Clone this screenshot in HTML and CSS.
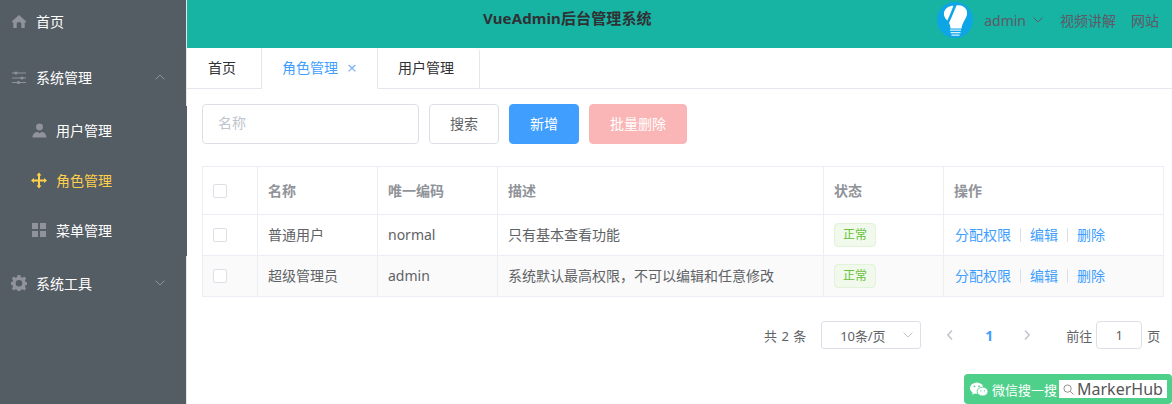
FILE: index.html
```html
<!DOCTYPE html>
<html lang="zh-CN">
<head>
<meta charset="utf-8">
<title>VueAdmin</title>
<link rel="stylesheet" href="styles.css">
</head>
<body>
<div class="app">
  <aside class="side">
    <ul class="menu">
      <li class="item top">
        <svg class="ic ic-home" viewBox="0 0 14 13"><path d="M7 0 0 6.200V7.500H1.300V13H4.700V8.500Q4.700 7 7 7T9.300 8.500V13H12.700V7.500H14V6.200Z"/></svg>
        <span>首页</span>
      </li>
      <li class="item top">
        <svg class="ic ic-sliders" viewBox="0 0 14 13"><path d="M0 1.500h14v1H0zM0 6.500h14v1H0zM0 11h14v1H0z"/><circle cx="4" cy="2" r="1.600"/><circle cx="10" cy="7" r="1.600"/><circle cx="6.500" cy="11.500" r="1.600"/></svg>
        <span class="lbl">系统管理</span>
        <svg class="arrow" viewBox="0 0 10 6"><path d="M.5 5.500 5 1l4.500 4.500"/></svg>
      </li>
      <li class="sub">
        <ul class="sublist">
          <li class="item subitem">
            <svg class="ic ic-user" viewBox="0 0 16 16"><circle cx="8" cy="4.200" r="3.700"/><path d="M.5 15.500c0-4 3-6 5-6.300L8 11l2.500-1.800c2 .3 5 2.300 5 6.300Z"/></svg>
            <span>用户管理</span>
          </li>
          <li class="item subitem active">
            <svg class="ic ic-move" viewBox="0 0 16 16"><path d="M8 0 10.500 3H9V7H13V5.500L16 8 13 10.500V9H9V13H10.500L8 16 5.500 13H7V9H3V10.500L0 8 3 5.500V7H7V3H5.500Z"/></svg>
            <span>角色管理</span>
          </li>
          <li class="item subitem">
            <svg class="ic ic-grid" viewBox="0 0 14 14"><path d="M0 0h6v6H0zM8 0h6v6H8zM0 8h6v6H0zM8 8h6v6H8z"/></svg>
            <span>菜单管理</span>
          </li>
        </ul>
      </li>
      <li class="item top">
        <svg class="ic" viewBox="0 0 16 16"><path fill-rule="evenodd" d="M6.600 0H9.400L9.900 2.200 11.400 2.800 13.300 1.600 15.100 3.500 13.900 5.400 14.500 6.800 16 7.200V9.800L14.500 10.200 13.900 11.600 15.100 13.500 13.300 15.400 11.400 14.200 9.900 14.800 9.400 16H6.600L6.100 14.800 4.600 14.200 2.700 15.400.9 13.500 2.100 11.600 1.500 10.200 0 9.800V7.200L1.500 6.800 2.100 5.400.9 3.500 2.700 1.600 4.600 2.800 6.100 2.200ZM8 5a3.300 3.300 0 1 0 0 6.600A3.300 3.300 0 0 0 8 5Z"/></svg>
        <span class="lbl">系统工具</span>
        <svg class="arrow" viewBox="0 0 10 6"><path d="M.5.500 5 5l4.500-4.500"/></svg>
      </li>
    </ul>
  </aside>
  <div class="main">
    <header class="head">
      <strong class="title">VueAdmin后台管理系统</strong>
      <div class="tools">
        <svg class="logo" viewBox="0 0 36 36">
          <circle cx="18" cy="18" r="18" fill="#0ea5e6"/>
          <path d="M19.500 3.500C25 2.500 31 6 30 12.500 29.300 17 25.500 19.500 24.500 26.500H13.500C13.300 23.500 12.800 22.500 12 21 15 15 17 9 19.500 3.500Z" fill="#fff"/>
          <path d="M16.500 3.800C14.500 9 12.500 14 10.300 18.500 7.500 16 6 12.500 7.500 9 9 5.500 13 3.800 16.500 3.800Z" fill="#fff"/>
          <path d="M13 27.500h11v1.300H13zM13.500 30h10v1.300h-10zM14.500 32.500h8v1.300h-8z" fill="#d9f2fc"/>
        </svg>
        <span class="admin">admin</span>
        <svg class="caret" viewBox="0 0 10 6"><path d="M.5.500 5 5l4.500-4.500"/></svg>
        <a class="hlink">视频讲解</a>
        <a class="hlink">网站</a>
      </div>
    </header>
    <nav class="tabs">
      <div class="tab first">首页</div>
      <div class="tab current">角色管理<span class="close">×</span></div>
      <div class="tab last">用户管理</div>
    </nav>
    <section class="content">
      <div class="bar">
        <div class="input">名称</div>
        <button class="btn">搜索</button>
        <button class="btn primary">新增</button>
        <button class="btn danger">批量删除</button>
      </div>
      <table class="grid">
        <colgroup>
          <col class="c1"><col class="c2"><col class="c3"><col class="c4"><col class="c5"><col class="c6">
        </colgroup>
        <thead>
          <tr><th class="box"><span class="check"></span></th><th>名称</th><th>唯一编码</th><th>描述</th><th>状态</th><th>操作</th></tr>
        </thead>
        <tbody>
          <tr>
            <td class="box"><span class="check"></span></td><td>普通用户</td><td>normal</td><td>只有基本查看功能</td>
            <td class="box"><span class="tag">正常</span></td>
            <td class="ops"><a class="op">分配权限</a><i class="sep"></i><a class="op">编辑</a><i class="sep"></i><a class="op">删除</a></td>
          </tr>
          <tr class="stripe">
            <td class="box"><span class="check"></span></td><td>超级管理员</td><td>admin</td><td>系统默认最高权限，不可以编辑和任意修改</td>
            <td class="box"><span class="tag">正常</span></td>
            <td class="ops"><a class="op">分配权限</a><i class="sep"></i><a class="op">编辑</a><i class="sep"></i><a class="op">删除</a></td>
          </tr>
        </tbody>
      </table>
      <div class="pager">
        <span class="total">共 2 条</span>
        <div class="size">10条/页<svg class="size-caret" viewBox="0 0 10 6"><path d="M.5.500 5 5l4.500-4.500"/></svg></div>
        <svg class="nav" viewBox="0 0 6 10"><path d="M5 .5.800 5 5 9.500"/></svg>
        <span class="pnum">1</span>
        <svg class="nav" viewBox="0 0 6 10"><path d="M1 .5 5.200 5 1 9.500"/></svg>
        <span class="goto">前往</span>
        <div class="pinput">1</div>
        <span>页</span>
      </div>
    </section>
  </div>
</div>
<div class="wx">
  <svg class="wx-ic" viewBox="0 0 20 16"><ellipse cx="7.500" cy="6.500" rx="7.500" ry="6.300" fill="#fff"/><path d="M3 11l-.5 3 3-2Z" fill="#fff"/><ellipse cx="14" cy="10.300" rx="6" ry="5" fill="#fff" stroke="#4fd08a"/><circle cx="5" cy="4.500" r="1" fill="#4fd08a"/><circle cx="10" cy="4.500" r="1" fill="#4fd08a"/><circle cx="12" cy="9.500" r=".8" fill="#4fd08a"/><circle cx="16" cy="9.500" r=".8" fill="#4fd08a"/></svg>
  <span class="wx-text">微信搜一搜</span>
  <div class="wx-box">
    <svg class="wx-search" viewBox="0 0 12 12"><circle cx="5" cy="5" r="4"/><path d="M8 8l3.500 3.500"/></svg>
    <span>MarkerHub</span>
  </div>
</div>
</body>
</html>
```
FILE: styles.css
```css
* { box-sizing: border-box; }
html, body { margin: 0; padding: 0; height: 100%; overflow: hidden; }
body {
  font-family: "Noto Sans", "Noto Sans CJK SC", sans-serif;
  font-size: 14px;
  color: #606266;
  background: #fff;
}
ul { list-style: none; margin: 0; padding: 0; }
.app { display: flex; height: 404px; }

.side { width: 187px; flex: none; background: #e6e6e6; overflow: hidden; }
.menu { margin-top: -6px; width: 186px; background: #545c64; min-height: 420px; }
.item { display: flex; align-items: center; color: #fff; padding-bottom: 2px; }
.top { height: 56px; padding-left: 11px; padding-right: 21px; }
.subitem { height: 50px; padding-left: 31px; }
.sub { width: 187px; background: #545c64; }
.active { color: #ffd04b; }
.ic { width: 16px; height: 16px; margin-right: 9px; fill: #909399; flex: none; }
.ic-home, .ic-sliders { width: 14px; height: 13px; margin-left: 1px; margin-right: 10px; }
.ic-user { margin-left: 1px; margin-right: 9px; width: 15px; height: 15px; }
.ic-grid { width: 14px; height: 14px; margin-left: 1px; margin-right: 10px; }
.ic-move { height: 17px; margin-top: 1px; }
.active .ic { fill: #ffd04b; }
.lbl { flex: 1; }
.arrow { width: 10px; height: 6px; fill: none; stroke: #909399; stroke-width: 1; }

.main { flex: 1; min-width: 0; }
.head {
  height: 48px;
  background: #17b3a3;
  display: flex;
  align-items: flex-start;
  justify-content: space-between;
  color: #333;
}
.title { margin: 7px 0 0 296px; font-size: 15px; line-height: 22px; color: #303133; letter-spacing: .12px; }
.tools { display: flex; align-items: center; height: 40px; padding-right: 13px; color: #5f5a66; }
.logo { width: 36px; height: 36px; margin-right: 11px; }
.admin { font-size: 14px; }
.caret { width: 10px; height: 6px; margin: 0 17px 0 7px; fill: none; stroke: #5f5a66; }
.hlink { margin-right: 15px; }
.hlink:last-child { margin-right: 0; }

.tabs { display: flex; height: 41px; border-bottom: 1px solid #e4e7ed; color: #303133; }
.tab {
  height: 41px;
  display: flex;
  align-items: center;
  padding-bottom: 2px;
  border: 1px solid #e4e7ed;
  border-left: 0;
  border-top: 0;
}
.first { width: 75px; padding-left: 21px; }
.current { width: 116px; padding-left: 20px; color: #409eff; border-bottom-color: #fff; }
.last { width: 102px; padding-left: 20px; border-radius: 0 4px 0 0; }
.close { margin-left: 9px; font-size: 17px; color: #7fb5f5; line-height: 1; }

.content { padding: 15px 8px 0 15px; }
.bar { display: flex; gap: 10px; height: 40px; }
.input {
  width: 217px;
  height: 40px;
  border: 1px solid #dcdfe6;
  border-radius: 4px;
  padding-left: 15px;
  line-height: 36px;
  color: #c0c4cc;
}
.btn {
  height: 40px;
  padding: 0 20px 2px;
  border: 1px solid #dcdfe6;
  border-radius: 4px;
  background: #fff;
  color: #606266;
  font: inherit;
}
.primary { background: #409eff; border-color: #409eff; color: #fff; }
.danger { background: #fab6b6; border-color: #fab6b6; color: #fff; }

.grid { margin-top: 22px; width: 961px; table-layout: fixed; border-collapse: collapse; }
.c1 { width: 55px; } .c2 { width: 120px; } .c3 { width: 120px; }
.c4 { width: 326px; } .c5 { width: 120px; } .c6 { width: 220px; }
.grid th, .grid td { border: 1px solid #ebeef5; padding: 0 10px 2px; text-align: left; }
.grid th { height: 48px; color: #909399; font-weight: 700; }
.grid td { height: 41px; }
.grid .box { padding-bottom: 0; }
.grid .ops { padding-left: 11px; }
.stripe td { background: #fafafa; }
.check {
  display: block;
  width: 14px;
  height: 14px;
  border: 1px solid #dcdfe6;
  border-radius: 2px;
  background: #fff;
}
.tag {
  display: inline-block;
  width: 42px;
  height: 24px;
  line-height: 21px;
  text-align: center;
  font-size: 12px;
  color: #67c23a;
  background: #f0f9eb;
  border: 1px solid #e1f3d8;
  border-radius: 4px;
  vertical-align: middle;
}
.op { color: #409eff; }
.sep { display: inline-block; width: 1px; height: 14px; margin: 0 9px; background: #dcdfe6; vertical-align: -2px; }

.pager { display: flex; align-items: center; height: 28px; margin-top: 24px; font-size: 13px; }
.total { margin-left: 562px; word-spacing: 1px; }
.size {
  width: 100px;
  height: 28px;
  margin-left: 15px;
  padding: 0 7px 0 18px;
  border: 1px solid #dcdfe6;
  border-radius: 3px;
  display: flex;
  align-items: center;
  justify-content: space-between;
  letter-spacing: -.1px;
}
.size-caret { width: 10px; height: 6px; fill: none; stroke: #c0c4cc; }
.nav { width: 6px; height: 10px; fill: none; stroke: #c0c4cc; stroke-width: 1.500; margin-left: 26px; }
.pnum { width: 10px; margin-left: 31px; color: #409eff; font-weight: 700; font-size: 14px; text-align: center; }
.pnum + .nav { margin-left: 30px; }
.goto { margin-left: 36px; width: 26px; white-space: nowrap; }
.pinput {
  width: 46px;
  height: 28px;
  margin: 0 5px 0 4px;
  border: 1px solid #dcdfe6;
  border-radius: 4px;
  text-align: center;
  line-height: 26px;
}

.wx {
  position: fixed;
  left: 964px;
  top: 374px;
  width: 208px;
  height: 30px;
  background: #4fd08a;
  border-radius: 4px;
  display: flex;
  align-items: center;
  padding-left: 6px;
  color: #fff;
  font-size: 13px;
}
.wx-ic { width: 18px; height: 15px; margin-right: 4px; }
.wx-text { white-space: nowrap; }
.wx-box {
  margin-left: 2px;
  width: 108px;
  height: 18px;
  background: #fff;
  color: #555;
  display: flex;
  align-items: center;
  font-size: 16px;
  padding-left: 4px;
}
.wx-search { width: 11px; height: 11px; margin-right: 3px; flex: none; fill: none; stroke: #888; }
```
